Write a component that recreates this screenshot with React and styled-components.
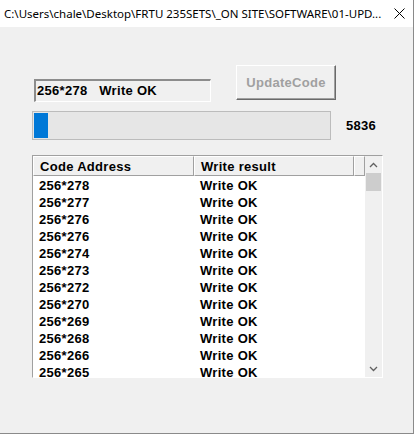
import React from "react";
import styled, { createGlobalStyle } from "styled-components";

const Global = createGlobalStyle`
  html, body { margin: 0; padding: 0; background: #ffffff; }
  * { box-sizing: border-box; }
`;

const Window = styled.div`
  width: 414px;
  height: 434px;
  display: flex;
  flex-direction: column;
  border-right: 1px solid #8a8a8a;
  border-bottom: 1px solid #8a8a8a;
  background: #f0f0f0;
  overflow: hidden;
`;

const TitleBar = styled.div`
  height: 27px;
  flex: none;
  background: #ffffff;
  display: flex;
  align-items: center;
  padding-left: 4px;
  font-family: "Noto Sans", "Open Sans", sans-serif;
  font-size: 11.5px;
  color: #000;
`;

const TitleText = styled.div`
  flex: 1;
  min-width: 0;
  overflow: hidden;
  white-space: nowrap;
  line-height: 27px;
  padding-bottom: 1px;
`;

const CloseBtn = styled.div`
  width: 20px;
  flex: none;
  height: 27px;
  display: flex;
  align-items: center;
  justify-content: flex-start;
  padding-left: 1px;
  padding-bottom: 1px;
`;

const Body = styled.div`
  flex: 1;
  padding: 38px 0 0 32px;
  font-family: "Liberation Sans", Arial, sans-serif;
  font-weight: bold;
  font-size: 13px;
  letter-spacing: 0.3px;
  color: #000;
`;

const TopRow = styled.div`
  display: flex;
  align-items: flex-start;
  height: 37px;
`;

const StatusField = styled.div`
  margin-left: 2px;
  margin-top: 14px;
  width: 177px;
  height: 23px;
  border-top: 2px solid #8c8c8c;
  border-left: 2px solid #8c8c8c;
  border-right: 1px solid #ffffff;
  border-bottom: 1px solid #ffffff;
  padding-left: 1px;
  line-height: 19px;
  white-space: pre;
`;

const Button = styled.div`
  margin-left: 25px;
  width: 100px;
  height: 35px;
  border-top: 1px solid #ffffff;
  border-left: 1px solid #ffffff;
  border-right: 1px solid #6a6a6a;
  border-bottom: 1px solid #6a6a6a;
  box-shadow: inset -1px -1px 0 #a0a0a0;
  display: flex;
  align-items: center;
  justify-content: center;
  color: #a0a0a0;
  padding-bottom: 1px;
`;

const ProgressRow = styled.div`
  display: flex;
  align-items: center;
  margin-top: 9px;
  height: 29px;
`;

const Progress = styled.div`
  width: 299px;
  height: 29px;
  border: 1px solid #bcbcbc;
  background: #e6e6e6;
  padding: 1px;
`;

const ProgressFill = styled.div`
  height: 100%;
  background: #0078d7;
`;

const Count = styled.div`
  margin-left: 15px;
`;

const ListBox = styled.div`
  margin-top: 15px;
  width: 351px;
  height: 223px;
  border-top: 1px solid #a0a0a0;
  border-left: 1px solid #a0a0a0;
  border-right: 1px solid #ffffff;
  border-bottom: 1px solid #ffffff;
  display: flex;
  background: #ffffff;
`;

const ListContent = styled.div`
  flex: 1;
  display: flex;
  flex-direction: column;
  overflow: hidden;
`;

const Header = styled.div`
  display: flex;
  height: 20px;
  flex: none;
  background: #f0f0f0;
`;

const HeaderCell = styled.div`
  width: ${(p) => p.$w}px;
  flex: ${(p) => (p.$grow ? 1 : "none")};
  height: 20px;
  border-top: 1px solid #ffffff;
  border-left: 1px solid #ffffff;
  border-right: 1px solid #a0a0a0;
  border-bottom: 1px solid #a0a0a0;
  padding: 1px 0 0 6px;
  line-height: 17px;
  white-space: nowrap;
  overflow: hidden;
`;

const Rows = styled.div`
  flex: 1;
  overflow: hidden;
  padding-top: 1px;
`;

const Row = styled.div`
  display: flex;
  height: 17px;
  line-height: 17px;
`;

const Cell = styled.div`
  width: ${(p) => p.$w}px;
  flex: ${(p) => (p.$grow ? 1 : "none")};
  padding-left: 6px;
  white-space: nowrap;
`;

const ScrollBar = styled.div`
  width: 17px;
  flex: none;
  background: #f0f0f0;
  display: flex;
  flex-direction: column;
`;

const Arrow = styled.div`
  height: 17px;
  flex: none;
  display: flex;
  align-items: center;
  justify-content: center;
`;

const Track = styled.div`
  flex: 1;
  padding: 0 1px;
`;

const Thumb = styled.div`
  height: 18px;
  background: #cdcdcd;
`;

const rows = [
  "278", "277", "276", "276", "274", "273",
  "272", "270", "269", "268", "266", "265",
];

export default function App() {
  return (
    <>
      <Global />
      <Window>
        <TitleBar>
          <TitleText>
            C:\Users\chale\Desktop\FRTU 235SETS\_ON SITE\SOFTWARE\01-UPD...
          </TitleText>
          <CloseBtn>
            <svg width="11" height="11" viewBox="0 0 11 11">
              <path d="M0.5 0.5 L10.5 10.5 M10.5 0.5 L0.5 10.5" stroke="#000" strokeWidth="1" fill="none" />
            </svg>
          </CloseBtn>
        </TitleBar>
        <Body>
          <TopRow>
            <StatusField>{"256*278   Write OK"}</StatusField>
            <Button>UpdateCode</Button>
          </TopRow>
          <ProgressRow>
            <Progress>
              <ProgressFill style={{ width: 14 }} />
            </Progress>
            <Count>5836</Count>
          </ProgressRow>
          <ListBox>
            <ListContent>
              <Header>
                <HeaderCell $w={161}>Code Address</HeaderCell>
                <HeaderCell $w={160}>Write result</HeaderCell>
                <HeaderCell $grow />
              </Header>
              <Rows>
                {rows.map((r, i) => (
                  <Row key={i}>
                    <Cell $w={161}>256*{r}</Cell>
                    <Cell $grow>Write OK</Cell>
                  </Row>
                ))}
              </Rows>
            </ListContent>
            <ScrollBar>
              <Arrow>
                <svg width="9" height="6" viewBox="0 0 9 6">
                  <path d="M1 5 L4.5 1.5 L8 5" stroke="#606060" strokeWidth="1.3" fill="none" />
                </svg>
              </Arrow>
              <Track>
                <Thumb />
              </Track>
              <Arrow>
                <svg width="9" height="6" viewBox="0 0 9 6">
                  <path d="M1 1 L4.5 4.5 L8 1" stroke="#606060" strokeWidth="1.3" fill="none" />
                </svg>
              </Arrow>
            </ScrollBar>
          </ListBox>
        </Body>
      </Window>
    </>
  );
}
